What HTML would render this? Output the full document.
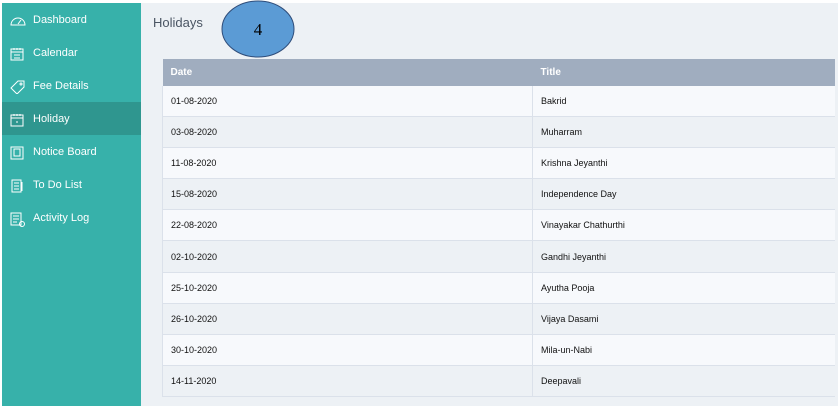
<!DOCTYPE html><html><head><style>
body{margin:0;width:838px;height:409px;background:#fff;font-family:"Liberation Sans",sans-serif;position:relative;overflow:hidden}
.sb{position:absolute;left:2px;top:3px;width:139px;height:403px;background:#37b1aa}
.it{position:absolute;left:0;width:139px;height:33px;color:#fff;font-size:11px;line-height:35px}
.it span{position:absolute;left:31px}
.it svg{position:absolute;left:8px;top:11px}
.act{background:#2f968f}
.main{position:absolute;left:141px;top:3px;width:697px;height:403px;background:#edf1f5}
h1{position:absolute;left:12px;top:12px;margin:0;font-size:13px;font-weight:normal;color:#4a5563}
table{position:absolute;left:21px;top:56px;width:673px;border-collapse:collapse;font-size:9px;color:#111}
th{background:#a0adbf;color:#fff;text-align:left;font-weight:bold;height:27px;padding:0 0 0 8px;font-size:10px}
td{height:30.1px;padding:0 0 0 8px;border-bottom:1px solid #dbe1ea;border-left:1px solid #dbe1ea}
tr:nth-child(odd) td{background:#edf1f5}
tr:nth-child(even) td{background:#f7f9fc}
</style></head><body>
<div class="sb">
<div class="it" style="top:0"><svg width="16" height="12" viewBox="0 0 16 12" fill="none" stroke="#fff" stroke-width="1"><path d="M1 11A7 7 0 0 1 15 11Z"/><path d="M8 10l3-4"/></svg><span>Dashboard</span></div>
<div class="it" style="top:33px"><svg width="14" height="14" viewBox="0 0 14 14" fill="none" stroke="#fff"><rect x="1" y="2" width="12" height="11"/><path d="M1 5h12M4 8h6M4 11h6M4 1v2M7 1v2M10 1v2"/></svg><span>Calendar</span></div>
<div class="it" style="top:66px"><svg width="15" height="14" viewBox="0 0 15 14" fill="none" stroke="#fff"><path d="M8 1h6v6l-7 7-6-6z"/><circle cx="11" cy="4" r="1"/></svg><span>Fee Details</span></div>
<div class="it act" style="top:99px"><svg width="14" height="14" viewBox="0 0 14 14" fill="none" stroke="#fff"><rect x="1" y="2" width="12" height="11"/><path d="M1 5h12M4 1v2M7 1v2M10 1v2M6 9h2"/></svg><span>Holiday</span></div>
<div class="it" style="top:132px"><svg width="14" height="14" viewBox="0 0 14 14" fill="none" stroke="#fff"><rect x="1" y="1" width="12" height="12"/><rect x="4" y="3" width="6" height="7"/></svg><span>Notice Board</span></div>
<div class="it" style="top:165px"><svg width="14" height="14" viewBox="0 0 14 14" fill="none" stroke="#fff"><rect x="2" y="1" width="9" height="12"/><path d="M4 4h5M4 7h5M4 10h5M12 3v9"/></svg><span>To Do List</span></div>
<div class="it" style="top:198px"><svg width="15" height="15" viewBox="0 0 15 15" fill="none" stroke="#fff"><rect x="1" y="1" width="10" height="12"/><path d="M3 4h6M3 7h6M3 10h4"/><circle cx="12" cy="12" r="2.5"/></svg><span>Activity Log</span></div>
</div>
<div class="main"><h1>Holidays</h1>
<table><tr><th style="width:362px">Date</th><th>Title</th></tr>
<tr><td>01-08-2020</td><td>Bakrid</td></tr>
<tr><td>03-08-2020</td><td>Muharram</td></tr>
<tr><td>11-08-2020</td><td>Krishna Jeyanthi</td></tr>
<tr><td>15-08-2020</td><td>Independence Day</td></tr>
<tr><td>22-08-2020</td><td>Vinayakar Chathurthi</td></tr>
<tr><td>02-10-2020</td><td>Gandhi Jeyanthi</td></tr>
<tr><td>25-10-2020</td><td>Ayutha Pooja</td></tr>
<tr><td>26-10-2020</td><td>Vijaya Dasami</td></tr>
<tr><td>30-10-2020</td><td>Mila-un-Nabi</td></tr>
<tr><td>14-11-2020</td><td>Deepavali</td></tr>
</table></div>
<svg style="position:absolute;left:220px;top:0" width="78" height="60"><ellipse cx="38" cy="29" rx="36" ry="28" fill="#5b9bd5" stroke="#2f4d7a" stroke-width="1"/><text x="38" y="35" font-size="17" text-anchor="middle" font-family="Liberation Serif,serif" fill="#000">4</text></svg>
</body></html>
